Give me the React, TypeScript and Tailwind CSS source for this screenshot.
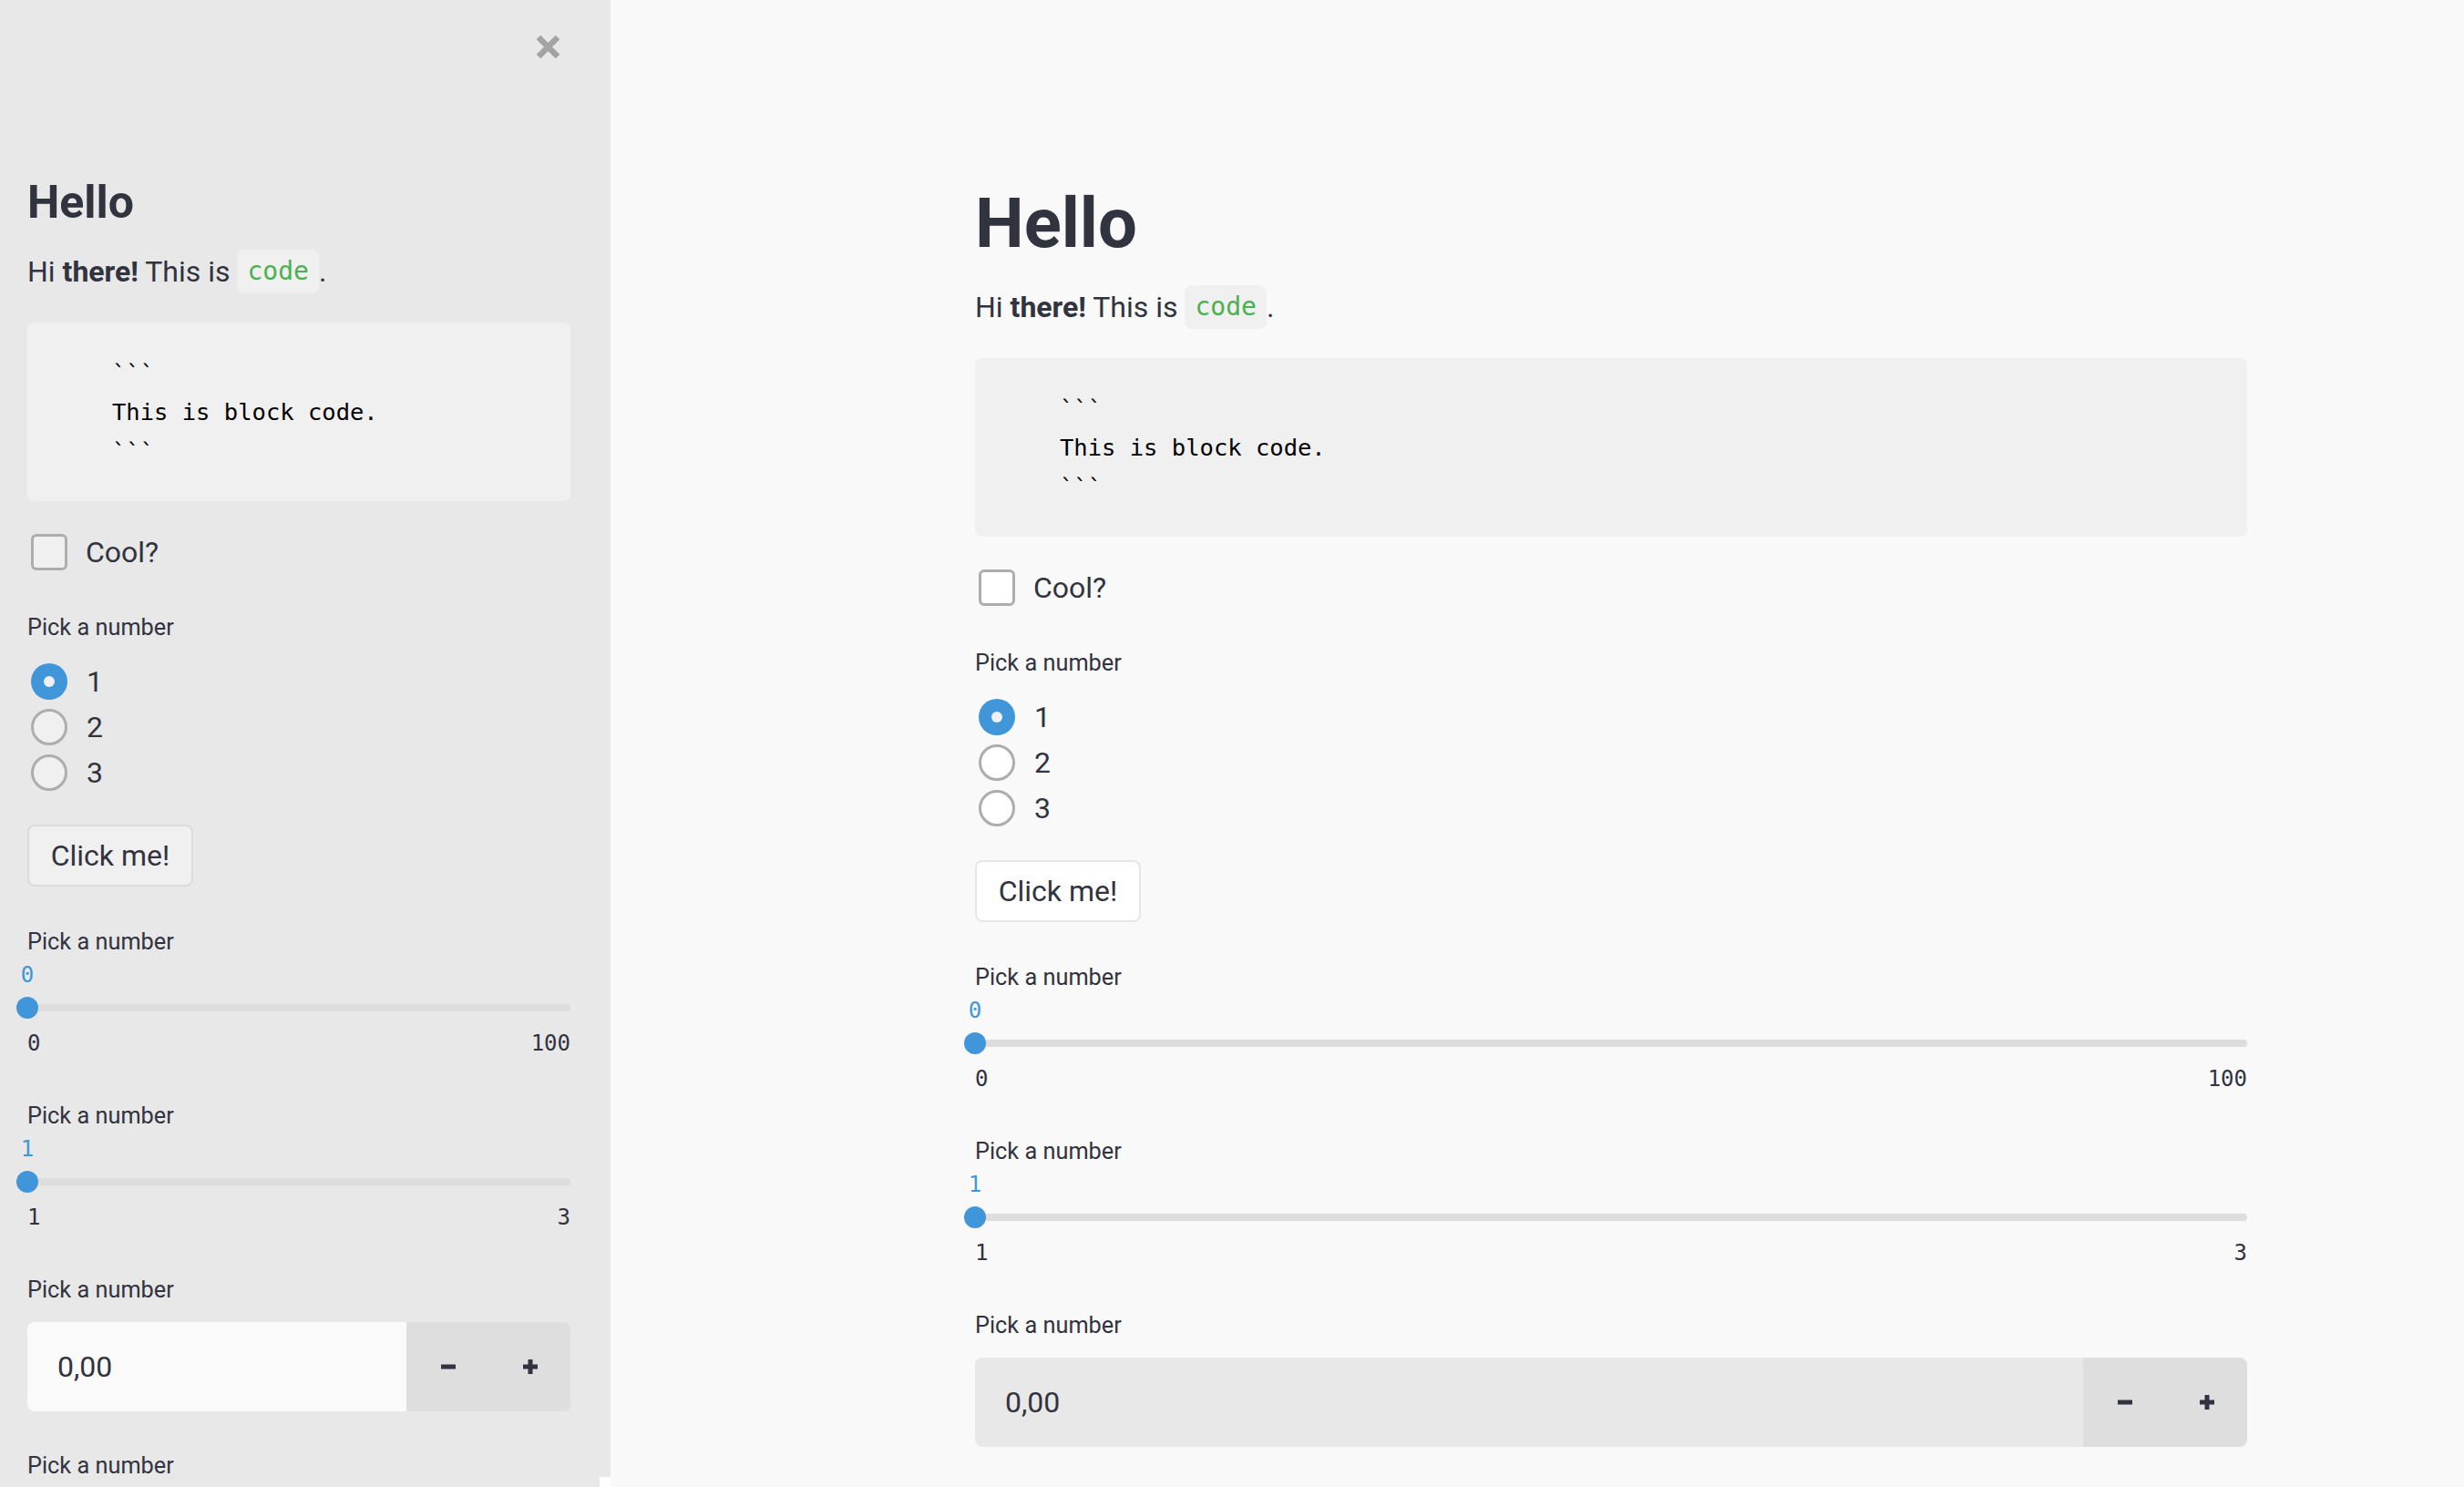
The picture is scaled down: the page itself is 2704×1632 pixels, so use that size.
import React from "react";

const sans = "font-['Roboto','Liberation_Sans',sans-serif]";
const mono = "font-['DejaVu_Sans_Mono','Liberation_Mono',monospace]";

function CloseIcon() {
  return (
    <svg width="27" height="27" viewBox="0 0 27 27">
      <path d="M3 3 L24 24 M24 3 L3 24" stroke="#a3a3a3" strokeWidth="6.5" />
    </svg>
  );
}

function Minus() {
  return (
    <svg width="16" height="16" viewBox="0 0 16 16">
      <rect x="0" y="5.5" width="16" height="5" fill="#31333f" />
    </svg>
  );
}

function Plus() {
  return (
    <svg width="16" height="16" viewBox="0 0 16 16">
      <rect x="0" y="5.5" width="16" height="5" fill="#31333f" />
      <rect x="5.5" y="0" width="5" height="16" fill="#31333f" />
    </svg>
  );
}

type Props = { side?: boolean };

function Label({ children, className = "" }: { children: React.ReactNode; className?: string }) {
  return <div className={"text-[25.3px] leading-[30px] " + className}>{children}</div>;
}

function Slider({ value, min, max, className = "" }: { value: string; min: string; max: string; className?: string }) {
  return (
    <div className={className}>
      <Label>Pick a number</Label>
      <div className={"mt-[6px] w-0 flex justify-center text-[24px] leading-[30px] text-[#4096d9] " + mono}>
        {value}
      </div>
      <div className="relative mt-[9px] h-[24px] flex items-center">
        <div className="h-[8px] w-full rounded-full bg-[#dddddd]" />
        <div className="absolute left-[-12px] top-0 h-[24px] w-[24px] rounded-full bg-[#4096d9]" />
      </div>
      <div className={"mt-[12px] flex justify-between text-[24px] leading-[30px] " + mono}>
        <span>{min}</span>
        <span>{max}</span>
      </div>
    </div>
  );
}

function Widgets({ side }: Props) {
  const boxBg = side ? "bg-[#f0f0f0]" : "bg-white";
  const btn = side ? "bg-[#f0f0f0] border-[#dcdcdc]" : "bg-white border-[#e6e6e6]";
  const inputBg = side ? "bg-[#fafafa]" : "bg-[#e8e8e8]";

  return (
    <>
      <p className="mt-[22px] h-[48px] text-[32px] leading-[48px] whitespace-nowrap">
        Hi <b className="font-bold">there!</b> This is{" "}
        <code
          className={
            "inline-block align-top h-[48px] px-[11px] rounded-[8px] bg-[#f0f0f0] text-[28px] leading-[48px] text-[#4caf50] " +
            mono
          }
        >
          code
        </code>
        .
      </p>

      <pre
        className={
          "mt-[32px] rounded-[8px] bg-[#f0f0f0] pt-[34px] pb-[33px] pl-[93px] text-[25.5px] leading-[43px] text-black " +
          mono
        }
      >
        {"```\nThis is block code.\n```"}
      </pre>

      <div className="mt-[36px] flex h-[40px] items-center">
        <div className={"ml-[4px] h-[40px] w-[40px] rounded-[6px] border-[3px] border-[#adadad] " + boxBg} />
        <span className="ml-[20px] text-[32px]">Cool?</span>
      </div>

      <Label className="mt-[48px]">Pick a number</Label>
      <div className="mt-[24px] flex flex-col gap-[10px]">
        {["1", "2", "3"].map((n, i) => (
          <div key={n} className="flex h-[40px] items-center">
            {i === 0 ? (
              <div className="ml-[4px] flex h-[40px] w-[40px] items-center justify-center rounded-full bg-[#4096d9]">
                <div className="h-[12px] w-[12px] rounded-full bg-[#eef0f5]" />
              </div>
            ) : (
              <div className={"ml-[4px] h-[40px] w-[40px] rounded-full border-[3px] border-[#adadad] " + boxBg} />
            )}
            <span className="ml-[21px] text-[32px]">{n}</span>
          </div>
        ))}
      </div>

      <button
        className={
          "mt-[37px] flex h-[68px] w-[182px] items-center justify-center rounded-[8px] border-2 text-[32px] " +
          btn
        }
      >
        Click me!
      </button>

      <Slider className="mt-[46px]" value="0" min="0" max="100" />
      <Slider className="mt-[50px]" value="1" min="1" max="3" />

      <Label className="mt-[50px]">Pick a number</Label>
      <div className="mt-[20px] flex h-[98px] overflow-hidden rounded-[8px]">
        <div className={"flex flex-1 items-center pl-[33px] text-[32px] " + inputBg}>0,00</div>
        <div className="flex w-[180px] bg-[#dedede]">
          <div className="flex w-[92px] items-center justify-center">
            <Minus />
          </div>
          <div className="flex w-[88px] items-center justify-center">
            <Plus />
          </div>
        </div>
      </div>

      {side && <Label className="mt-[45px]">Pick a number</Label>}
    </>
  );
}

export default function App() {
  return (
    <div className={"flex h-[1632px] w-[2704px] overflow-hidden text-[#31333f] " + sans}>
      {/* Sidebar */}
      <aside className="relative h-full w-[670px] shrink-0 overflow-hidden bg-[#e8e8e8]">
        <div className="flex justify-end pr-[55px] pt-[38px]">
          <CloseIcon />
        </div>
        <div className="ml-[30px] mt-[127px] w-[596px]">
          <h1 className="text-[50px] leading-[60px] font-bold">Hello</h1>
          <Widgets side />
        </div>
        {/* scrollbar corner */}
        <div className="absolute bottom-0 right-0 h-[11px] w-[12px] bg-white" />
      </aside>

      {/* Main */}
      <main className="h-full flex-1 bg-[#f9f9f9] pl-[400px] pt-[200px]">
        <div className="w-[1396px]">
          <h1 className="text-[76px] leading-[91px] font-bold">Hello</h1>
          <div className="mt-[7px]">
            <Widgets />
          </div>
        </div>
      </main>
    </div>
  );
}
